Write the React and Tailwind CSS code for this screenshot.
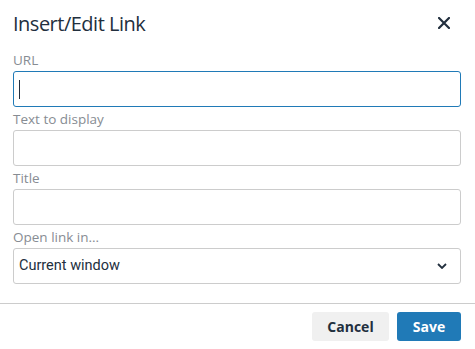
import React from 'react';

const Field = ({ label, focused, children }) => (
  <div className="flex flex-col">
    <label className="h-[23px] pt-[2px] text-[13.5px] leading-[20px] text-[#878c93]">{label}</label>
    {children || (
      <div
        className={`relative h-[36px] rounded-[3px] border bg-white ${
          focused ? 'border-[#207ab7]' : 'border-[#cccccc]'
        }`}
      >
        {focused && <div className="absolute left-[5px] top-[8px] h-[19px] w-px bg-[#222f3e]" />}
      </div>
    )}
  </div>
);

export default function App() {
  return (
    <div className="w-[475px] h-[349px] bg-white font-['Open_Sans',sans-serif] text-[#222f3e]">
      <div className="flex items-center justify-between pl-[13px] pr-[25px] pt-[6px] h-[41px]">
        <h1 className="text-[20px] leading-[28px] tracking-[-0.5px]">Insert/Edit Link</h1>
        <svg width="12" height="12" viewBox="0 0 12 12" className="mt-[-1px]">
          <path d="M1 1 L11 11 M11 1 L1 11" stroke="#222f3e" strokeWidth="2.2" strokeLinecap="square" />
        </svg>
      </div>

      <div className="flex flex-col px-[13px] pr-[14px] pt-[7px]">
        <Field label="URL" focused />
        <Field label="Text to display" />
        <Field label="Title" />
        <Field label="Open link in...">
          <div className="flex h-[36px] items-center justify-between rounded-[3px] border border-[#cccccc] pl-[5px] pr-[13px]">
            <span className="font-['Roboto',sans-serif] text-[14.5px] text-[#222f3e]">Current window</span>
            <svg width="10" height="6" viewBox="0 0 10 6">
              <path d="M1 1 L5 5 L9 1" fill="none" stroke="#222f3e" strokeWidth="1.8" />
            </svg>
          </div>
        </Field>
      </div>

      <div className="mt-[19px] border-t border-b border-[#cccccc] flex justify-end gap-[8px] px-[14px] pt-[8px] pb-[8px]">
        <button className="h-[29px] w-[77px] rounded-[3px] bg-[#f0f0f0] text-[14px] font-bold text-[#222f3e]">
          Cancel
        </button>
        <button className="h-[29px] w-[64px] rounded-[3px] bg-[#207ab7] text-[14px] font-bold text-white">
          Save
        </button>
      </div>
    </div>
  );
}
